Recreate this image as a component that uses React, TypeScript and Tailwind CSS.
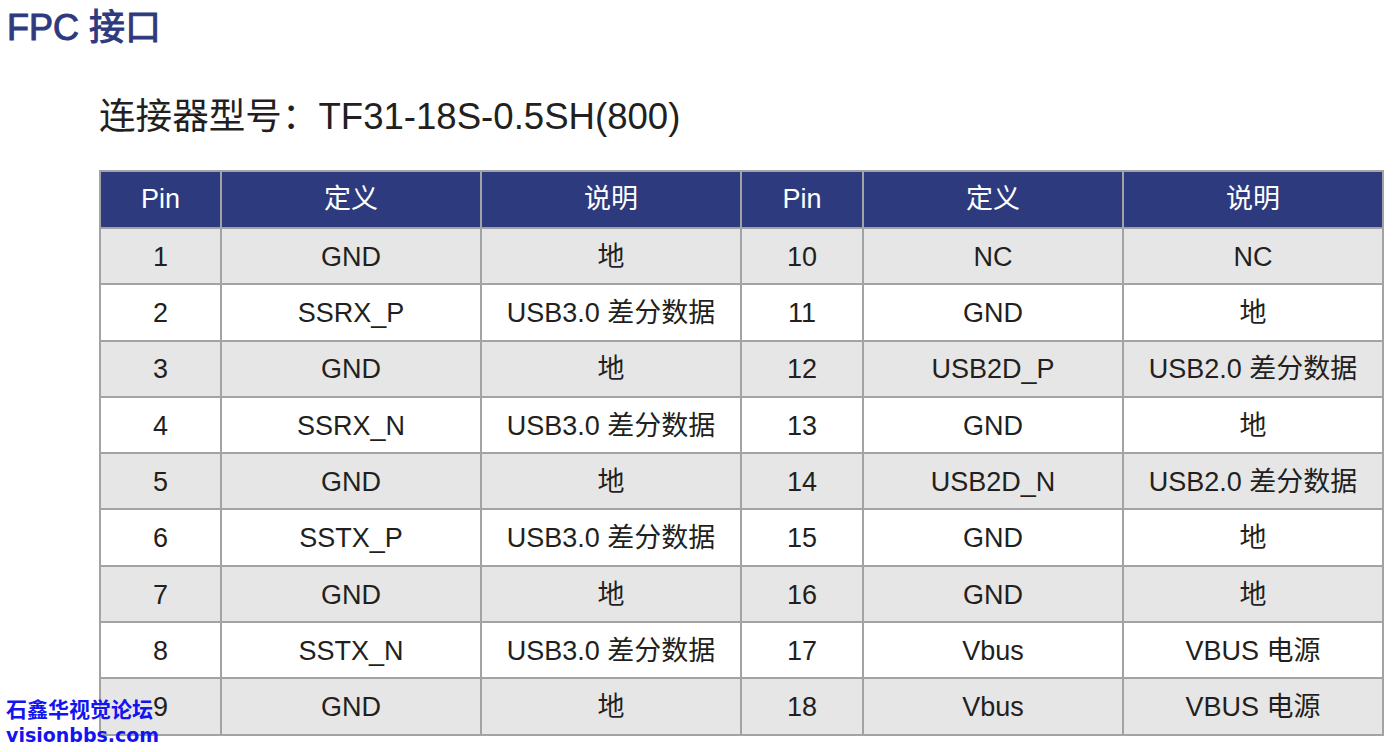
const rows: [string, string, string, string, string, string][] = [
  ["1", "GND", "地", "10", "NC", "NC"],
  ["2", "SSRX_P", "USB3.0 差分数据", "11", "GND", "地"],
  ["3", "GND", "地", "12", "USB2D_P", "USB2.0 差分数据"],
  ["4", "SSRX_N", "USB3.0 差分数据", "13", "GND", "地"],
  ["5", "GND", "地", "14", "USB2D_N", "USB2.0 差分数据"],
  ["6", "SSTX_P", "USB3.0 差分数据", "15", "GND", "地"],
  ["7", "GND", "地", "16", "GND", "地"],
  ["8", "SSTX_N", "USB3.0 差分数据", "17", "Vbus", "VBUS 电源"],
  ["9", "GND", "地", "18", "Vbus", "VBUS 电源"],
];

const heads = ["Pin", "定义", "说明", "Pin", "定义", "说明"];
const widths = ["w-[121px]", "w-[260px]", "w-[260px]", "w-[122px]", "w-[260px]", "w-[260px]"];

export default function App() {
  return (
    <div
      className="relative min-h-[752px] bg-white text-[#231f20]"
      style={{ fontFamily: '"Liberation Sans", "Noto Sans CJK SC", sans-serif' }}
    >
      <h1 className="pl-[7px] pt-[8px] text-[36px] leading-[40px] font-normal text-[#2e3a7e] [-webkit-text-stroke:1px_#2e3a7e]">
        FPC 接口
      </h1>

      <p className="ml-[99px] mt-[49px] text-[36.6px] leading-[40px] text-[#231f20]">
        连接器型号：TF31-18S-0.5SH(800)
      </p>

      <table className="ml-[99px] mt-[33px] w-[1284px] table-fixed border-collapse border-2 border-[#a3a3a6] text-[27px]">
        <colgroup>
          {widths.map((w, i) => (
            <col key={i} className={w} />
          ))}
        </colgroup>
        <thead>
          <tr className="h-[57px] bg-[#2e3a7e] text-white">
            {heads.map((h, i) => (
              <th key={i} className="border-2 border-[#a3a3a6] font-normal text-center">
                {h}
              </th>
            ))}
          </tr>
        </thead>
        <tbody>
          {rows.map((r, i) => (
            <tr key={i} className={i % 2 === 0 ? "h-[56.3px] bg-[#e6e6e6]" : "h-[56.3px] bg-white"}>
              {r.map((c, j) => (
                <td key={j} className="border-2 border-[#a3a3a6] pt-[2px] text-center whitespace-nowrap">
                  {c}
                </td>
              ))}
            </tr>
          ))}
        </tbody>
      </table>

      {/* forum watermark over the table corner */}
      <div className="absolute left-[6px] top-[694px] text-[#1414f0] font-bold">
        <div className="text-[21px] leading-[28px]" style={{ fontFamily: '"Noto Sans CJK SC", sans-serif' }}>
          石鑫华视觉论坛
        </div>
        <div className="text-[19px] leading-[26px]" style={{ fontFamily: '"DejaVu Sans", sans-serif' }}>
          visionbbs.com
        </div>
      </div>
    </div>
  );
}
